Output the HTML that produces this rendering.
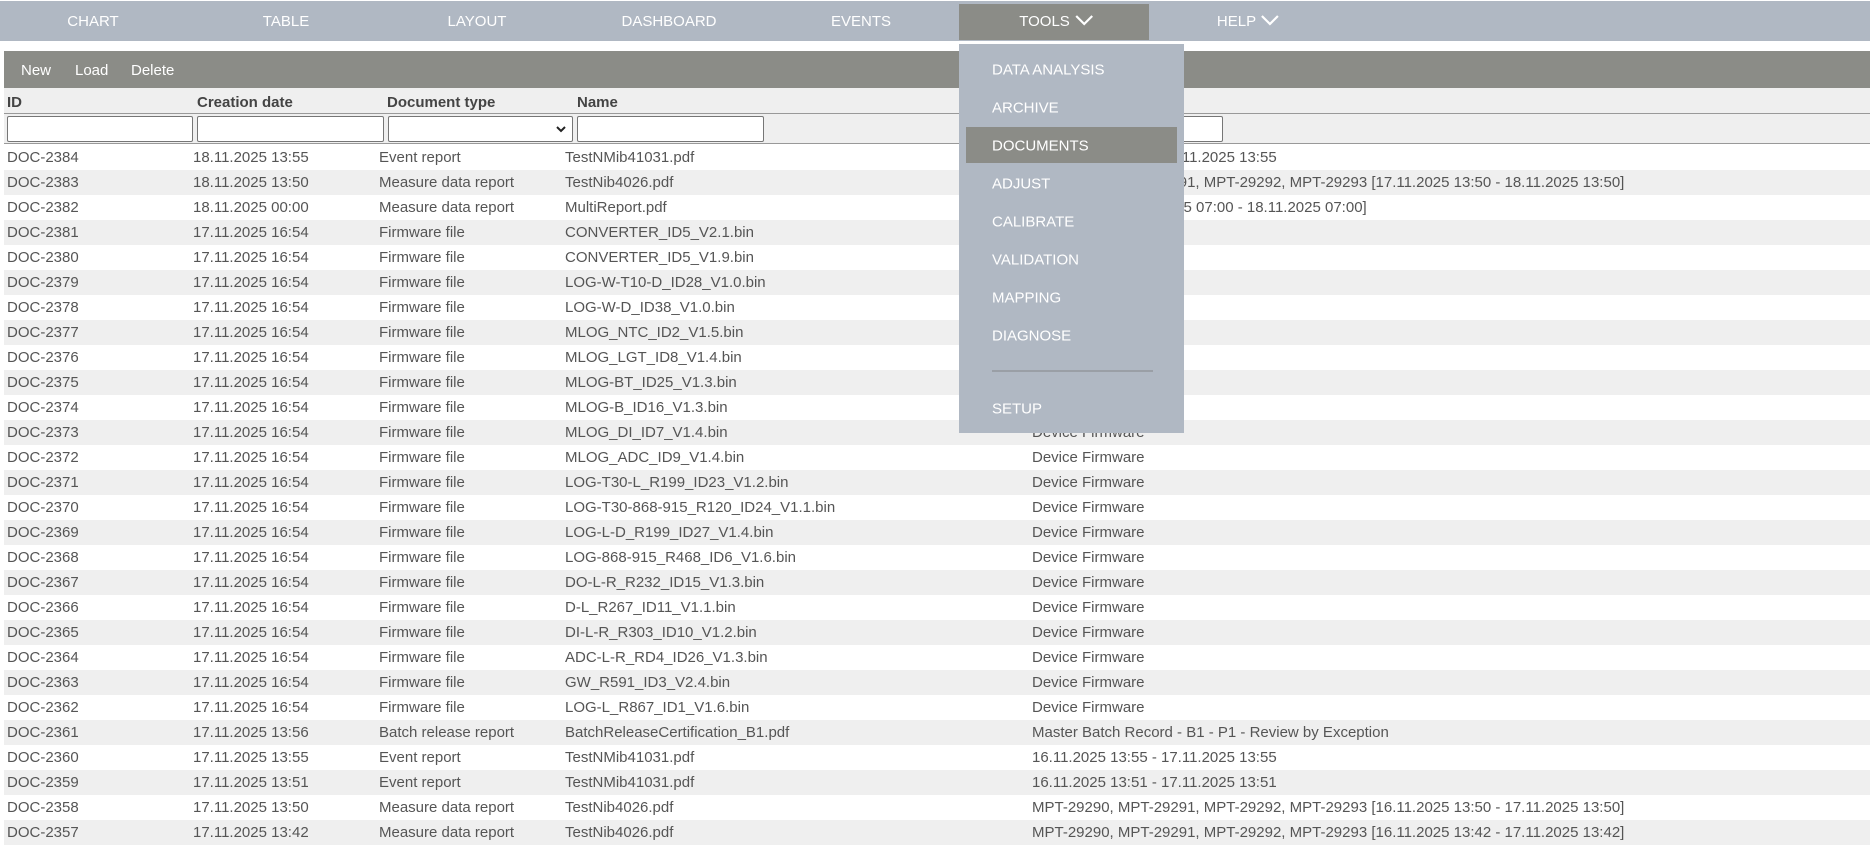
<!DOCTYPE html>
<html><head><meta charset="utf-8">
<style>
*{box-sizing:border-box;margin:0;padding:0}
body{width:1870px;height:851px;overflow:hidden;background:#fff;font-family:"Liberation Sans",sans-serif;position:relative;color:#555}
.nav{position:absolute;left:0;top:1px;width:1870px;height:40px;background:#b0b8c3}
.nav span{position:absolute;top:1px;height:40px;line-height:40px;color:#fff;font-size:15px;transform:translateX(-50%);white-space:nowrap}
.tools{position:absolute;left:959px;top:3px;width:190px;height:36px;background:#8b8c87}
.chev{display:inline-block;vertical-align:middle;margin-left:5px;margin-top:-3px}
.tb{position:absolute;left:4px;top:51px;width:1866px;height:37px;background:#8b8c87}
.tb span{position:absolute;top:1px;line-height:37px;color:#fff;font-size:15px}
.hd{position:absolute;left:4px;top:88px;width:1866px;height:56px;background:#efefef;border-bottom:1px solid #999}
.hd b{position:absolute;top:6px;font-size:15px;color:#444}
.hline{position:absolute;left:4px;top:113px;width:1866px;height:1px;background:#999}
.in{position:absolute;top:116px;height:26px;background:#fff;border:1px solid #767676;border-radius:2px}
.rows{position:absolute;left:4px;top:145px;width:1866px;height:700px;overflow:hidden}
.r{height:25px;position:relative;font-size:15px;line-height:26px;color:#555}
.r:nth-child(even){background:#efefef}
.r span{position:absolute;top:0;white-space:nowrap}
.dd{position:absolute;left:959px;top:44px;width:225px;height:389px;background:#b0b8c3}
.dd span{position:absolute;left:33px;color:#fff;font-size:15px;transform:translateY(-50%);white-space:nowrap}
.hl{position:absolute;left:7px;top:83px;width:211px;height:36px;background:#8b8c87}
.sep{position:absolute;left:33px;top:326px;width:161px;height:2px;background:#9a9fa6}
</style></head><body>
<div class="nav">
<span style="left:93px">CHART</span>
<span style="left:286px">TABLE</span>
<span style="left:477px">LAYOUT</span>
<span style="left:669px">DASHBOARD</span>
<span style="left:861px">EVENTS</span>
<div class="tools"></div>
<span style="left:1056px">TOOLS<svg class="chev" width="18" height="11" viewBox="0 0 18 11"><path d="M1 1 L9 9 L17 1" fill="none" stroke="#fff" stroke-width="2.2"/></svg></span>
<span style="left:1248px">HELP<svg class="chev" width="18" height="11" viewBox="0 0 18 11"><path d="M1 1 L9 9 L17 1" fill="none" stroke="#fff" stroke-width="2.2"/></svg></span>
</div>
<div class="tb"><span style="left:17px">New</span><span style="left:71px">Load</span><span style="left:127px">Delete</span></div>
<div class="hd">
<b style="left:3px">ID</b><b style="left:193px">Creation date</b><b style="left:383px">Document type</b><b style="left:573px">Name</b>
</div>
<div class="hline"></div>
<div class="in" style="left:7px;width:186px"></div>
<div class="in" style="left:197px;width:187px"></div>
<div class="in" style="left:388px;width:185px"><svg style="position:absolute;right:6px;top:9px" width="10" height="7" viewBox="0 0 10 7"><path d="M1 1 L5 5 L9 1" fill="none" stroke="#222" stroke-width="2"/></svg></div>
<div class="in" style="left:577px;width:187px"></div>
<div class="in" style="left:1032px;width:191px"></div>
<div class="rows">
<div class="r"><span style="left:3px">DOC-2384</span><span style="left:189px">18.11.2025 13:55</span><span style="left:375px">Event report</span><span style="left:561px">TestNMib41031.pdf</span><span style="left:1028px">17.11.2025 13:55 - 18.11.2025 13:55</span></div>
<div class="r"><span style="left:3px">DOC-2383</span><span style="left:189px">18.11.2025 13:50</span><span style="left:375px">Measure data report</span><span style="left:561px">TestNib4026.pdf</span><span style="left:1028px">MPT-29290, MPT-29291, MPT-29292, MPT-29293 [17.11.2025 13:50 - 18.11.2025 13:50]</span></div>
<div class="r"><span style="left:3px">DOC-2382</span><span style="left:189px">18.11.2025 00:00</span><span style="left:375px">Measure data report</span><span style="left:561px">MultiReport.pdf</span><span style="left:1028px">MPT-29290 [17.11.2025 07:00 - 18.11.2025 07:00]</span></div>
<div class="r"><span style="left:3px">DOC-2381</span><span style="left:189px">17.11.2025 16:54</span><span style="left:375px">Firmware file</span><span style="left:561px">CONVERTER_ID5_V2.1.bin</span><span style="left:1028px">Device Firmware</span></div>
<div class="r"><span style="left:3px">DOC-2380</span><span style="left:189px">17.11.2025 16:54</span><span style="left:375px">Firmware file</span><span style="left:561px">CONVERTER_ID5_V1.9.bin</span><span style="left:1028px">Device Firmware</span></div>
<div class="r"><span style="left:3px">DOC-2379</span><span style="left:189px">17.11.2025 16:54</span><span style="left:375px">Firmware file</span><span style="left:561px">LOG-W-T10-D_ID28_V1.0.bin</span><span style="left:1028px">Device Firmware</span></div>
<div class="r"><span style="left:3px">DOC-2378</span><span style="left:189px">17.11.2025 16:54</span><span style="left:375px">Firmware file</span><span style="left:561px">LOG-W-D_ID38_V1.0.bin</span><span style="left:1028px">Device Firmware</span></div>
<div class="r"><span style="left:3px">DOC-2377</span><span style="left:189px">17.11.2025 16:54</span><span style="left:375px">Firmware file</span><span style="left:561px">MLOG_NTC_ID2_V1.5.bin</span><span style="left:1028px">Device Firmware</span></div>
<div class="r"><span style="left:3px">DOC-2376</span><span style="left:189px">17.11.2025 16:54</span><span style="left:375px">Firmware file</span><span style="left:561px">MLOG_LGT_ID8_V1.4.bin</span><span style="left:1028px">Device Firmware</span></div>
<div class="r"><span style="left:3px">DOC-2375</span><span style="left:189px">17.11.2025 16:54</span><span style="left:375px">Firmware file</span><span style="left:561px">MLOG-BT_ID25_V1.3.bin</span><span style="left:1028px">Device Firmware</span></div>
<div class="r"><span style="left:3px">DOC-2374</span><span style="left:189px">17.11.2025 16:54</span><span style="left:375px">Firmware file</span><span style="left:561px">MLOG-B_ID16_V1.3.bin</span><span style="left:1028px">Device Firmware</span></div>
<div class="r"><span style="left:3px">DOC-2373</span><span style="left:189px">17.11.2025 16:54</span><span style="left:375px">Firmware file</span><span style="left:561px">MLOG_DI_ID7_V1.4.bin</span><span style="left:1028px">Device Firmware</span></div>
<div class="r"><span style="left:3px">DOC-2372</span><span style="left:189px">17.11.2025 16:54</span><span style="left:375px">Firmware file</span><span style="left:561px">MLOG_ADC_ID9_V1.4.bin</span><span style="left:1028px">Device Firmware</span></div>
<div class="r"><span style="left:3px">DOC-2371</span><span style="left:189px">17.11.2025 16:54</span><span style="left:375px">Firmware file</span><span style="left:561px">LOG-T30-L_R199_ID23_V1.2.bin</span><span style="left:1028px">Device Firmware</span></div>
<div class="r"><span style="left:3px">DOC-2370</span><span style="left:189px">17.11.2025 16:54</span><span style="left:375px">Firmware file</span><span style="left:561px">LOG-T30-868-915_R120_ID24_V1.1.bin</span><span style="left:1028px">Device Firmware</span></div>
<div class="r"><span style="left:3px">DOC-2369</span><span style="left:189px">17.11.2025 16:54</span><span style="left:375px">Firmware file</span><span style="left:561px">LOG-L-D_R199_ID27_V1.4.bin</span><span style="left:1028px">Device Firmware</span></div>
<div class="r"><span style="left:3px">DOC-2368</span><span style="left:189px">17.11.2025 16:54</span><span style="left:375px">Firmware file</span><span style="left:561px">LOG-868-915_R468_ID6_V1.6.bin</span><span style="left:1028px">Device Firmware</span></div>
<div class="r"><span style="left:3px">DOC-2367</span><span style="left:189px">17.11.2025 16:54</span><span style="left:375px">Firmware file</span><span style="left:561px">DO-L-R_R232_ID15_V1.3.bin</span><span style="left:1028px">Device Firmware</span></div>
<div class="r"><span style="left:3px">DOC-2366</span><span style="left:189px">17.11.2025 16:54</span><span style="left:375px">Firmware file</span><span style="left:561px">D-L_R267_ID11_V1.1.bin</span><span style="left:1028px">Device Firmware</span></div>
<div class="r"><span style="left:3px">DOC-2365</span><span style="left:189px">17.11.2025 16:54</span><span style="left:375px">Firmware file</span><span style="left:561px">DI-L-R_R303_ID10_V1.2.bin</span><span style="left:1028px">Device Firmware</span></div>
<div class="r"><span style="left:3px">DOC-2364</span><span style="left:189px">17.11.2025 16:54</span><span style="left:375px">Firmware file</span><span style="left:561px">ADC-L-R_RD4_ID26_V1.3.bin</span><span style="left:1028px">Device Firmware</span></div>
<div class="r"><span style="left:3px">DOC-2363</span><span style="left:189px">17.11.2025 16:54</span><span style="left:375px">Firmware file</span><span style="left:561px">GW_R591_ID3_V2.4.bin</span><span style="left:1028px">Device Firmware</span></div>
<div class="r"><span style="left:3px">DOC-2362</span><span style="left:189px">17.11.2025 16:54</span><span style="left:375px">Firmware file</span><span style="left:561px">LOG-L_R867_ID1_V1.6.bin</span><span style="left:1028px">Device Firmware</span></div>
<div class="r"><span style="left:3px">DOC-2361</span><span style="left:189px">17.11.2025 13:56</span><span style="left:375px">Batch release report</span><span style="left:561px">BatchReleaseCertification_B1.pdf</span><span style="left:1028px">Master Batch Record - B1 - P1 - Review by Exception</span></div>
<div class="r"><span style="left:3px">DOC-2360</span><span style="left:189px">17.11.2025 13:55</span><span style="left:375px">Event report</span><span style="left:561px">TestNMib41031.pdf</span><span style="left:1028px">16.11.2025 13:55 - 17.11.2025 13:55</span></div>
<div class="r"><span style="left:3px">DOC-2359</span><span style="left:189px">17.11.2025 13:51</span><span style="left:375px">Event report</span><span style="left:561px">TestNMib41031.pdf</span><span style="left:1028px">16.11.2025 13:51 - 17.11.2025 13:51</span></div>
<div class="r"><span style="left:3px">DOC-2358</span><span style="left:189px">17.11.2025 13:50</span><span style="left:375px">Measure data report</span><span style="left:561px">TestNib4026.pdf</span><span style="left:1028px">MPT-29290, MPT-29291, MPT-29292, MPT-29293 [16.11.2025 13:50 - 17.11.2025 13:50]</span></div>
<div class="r"><span style="left:3px">DOC-2357</span><span style="left:189px">17.11.2025 13:42</span><span style="left:375px">Measure data report</span><span style="left:561px">TestNib4026.pdf</span><span style="left:1028px">MPT-29290, MPT-29291, MPT-29292, MPT-29293 [16.11.2025 13:42 - 17.11.2025 13:42]</span></div>
</div>
<div class="dd">
<div class="hl"></div>
<span style="top:26px">DATA ANALYSIS</span>
<span style="top:64px">ARCHIVE</span>
<span style="top:102px">DOCUMENTS</span>
<span style="top:140px">ADJUST</span>
<span style="top:178px">CALIBRATE</span>
<span style="top:216px">VALIDATION</span>
<span style="top:254px">MAPPING</span>
<span style="top:292px">DIAGNOSE</span>
<div class="sep"></div>
<span style="top:365px">SETUP</span>
</div>
</body></html>
